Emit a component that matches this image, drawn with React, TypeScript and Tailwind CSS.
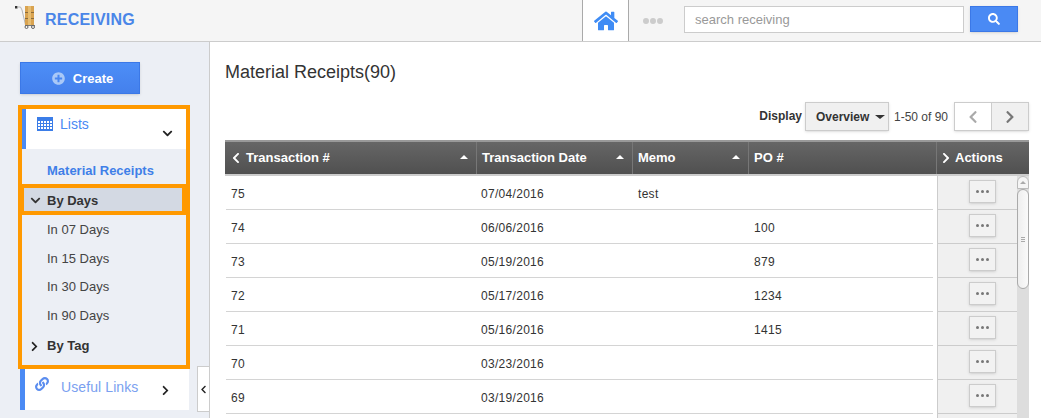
import { FaChevronDown, FaChevronLeft, FaChevronRight, FaHome, FaLink, FaPlusCircle, FaSearch } from 'react-icons/fa';

const rows = [
  { id: '75', date: '07/04/2016', memo: 'test', po: '' },
  { id: '74', date: '06/06/2016', memo: '', po: '100' },
  { id: '73', date: '05/19/2016', memo: '', po: '879' },
  { id: '72', date: '05/17/2016', memo: '', po: '1234' },
  { id: '71', date: '05/16/2016', memo: '', po: '1415' },
  { id: '70', date: '03/23/2016', memo: '', po: '' },
  { id: '69', date: '03/19/2016', memo: '', po: '' },
];

function TrolleyLogo() {
  return (
    <svg width="21" height="23" viewBox="0 0 21 23" className="shrink-0">
      <rect x="0" y="0" width="2.5" height="2.5" fill="#333" />
      <path d="M2 1h3.5l1.5 3 3.5 15" fill="none" stroke="#b5b5b5" strokeWidth="1" />
      <rect x="10" y="0" width="9" height="19" fill="#d9a350" />
      <rect x="10" y="6" width="9" height="1" fill="#8a6a3a" />
      <rect x="10" y="12" width="9" height="1" fill="#8a6a3a" />
      <rect x="13" y="0" width="3" height="19" fill="#e6bd72" />
      <rect x="10" y="19" width="10" height="1" fill="#777" />
      <circle cx="11.5" cy="21" r="1.5" fill="none" stroke="#666" strokeWidth="1" />
      <circle cx="18" cy="21" r="1.5" fill="none" stroke="#666" strokeWidth="1" />
    </svg>
  );
}

function GridIcon() {
  return (
    <svg width="16" height="14" viewBox="0 0 16 14">
      <rect width="16" height="14" fill="#3b7de8" />
      {[1, 4, 7, 10, 13].map((x) =>
        [4, 7, 10].map((y) => <rect key={`${x}-${y}`} x={x} y={y} width="2" height="2" fill="#fff" />),
      )}
    </svg>
  );
}

function SortCaret() {
  return <span className="h-0 w-0 border-x-[4px] border-b-[4px] border-x-transparent border-b-white" />;
}

function HeaderCell({ label, width, back }: { label: string; width: string; back?: boolean }) {
  return (
    <div className={`${width} flex h-full items-center border-r border-[#777] pl-[5px] pr-[8px]`}>
      {back && <FaChevronLeft className="mr-[4px] text-[12px]" />}
      <span>{label}</span>
      <span className="ml-auto flex pb-[3px]">
        <SortCaret />
      </span>
    </div>
  );
}

function DayLink({ label, className }: { label: string; className: string }) {
  return <div className={`${className} flex items-center pl-[25px] text-[13px] text-[#444]`}>{label}</div>;
}

export default function App() {
  return (
    <div className="h-[418px] w-[1041px] overflow-hidden bg-white font-['Liberation_Sans',Arial,sans-serif] text-[12px] text-[#333]">
      <header className="flex h-[42px] items-stretch border-b border-[#ccc] bg-[#f5f5f5]">
        <div className="flex w-[582px] items-start">
          <div className="ml-[15px] mt-[6px]">
            <TrolleyLogo />
          </div>
          <span className="ml-[9px] mt-[10px] text-[16px] font-bold leading-[20px] tracking-[0.2px] text-[#4a86e8]">RECEIVING</span>
        </div>
        <div className="flex h-[41px] w-[47px] items-center justify-center border-x border-[#aaa] bg-white">
          <FaHome className="text-[24px] text-[#3f8cf5]" />
        </div>
        <div className="ml-[14px] flex items-center gap-[1px]">
          <span className="h-[6px] w-[6px] rounded-full bg-[#ccc]" />
          <span className="h-[6px] w-[6px] rounded-full bg-[#ccc]" />
          <span className="h-[6px] w-[6px] rounded-full bg-[#ccc]" />
        </div>
        <div className="ml-[21px] mt-[6px] flex h-[27px] w-[280px] items-center border border-[#ccc] bg-white pl-[10px] text-[13px] text-[#999]">
          search receiving
        </div>
        <button className="ml-[6px] mt-[6px] flex h-[26px] w-[48px] items-center justify-center border border-[#3b78e7] bg-[#4a8af4] text-[12px] text-white shadow-sm">
          <FaSearch />
        </button>
      </header>

      <div className="flex h-[376px]">
        <aside className="relative h-full w-[210px] shrink-0 border-r border-[#ccc] bg-[#eceff5] pl-[18px]">
          <button className="ml-[2px] mt-[20px] flex h-[32px] w-[120px] items-center justify-center gap-[8px] border border-[#3b78e7] bg-gradient-to-b from-[#4d8ef7] to-[#4480ec] pl-[5px] pt-px text-[13px] font-bold text-white shadow-sm">
            <FaPlusCircle className="text-[13px] text-[#a9c8f7]" />
            Create
          </button>

          <div className="mt-[11px] h-[264px] w-[172px] border-4 border-[#ff9900]">
            <div className="flex h-[40px] border-l-4 border-[#4a8af4] bg-white pl-[11px] text-[#4a8af4]">
              <div className="flex h-[30px] items-center gap-[7px] text-[14px]">
                <GridIcon />
                <span>Lists</span>
              </div>
              <FaChevronDown className="ml-auto mr-[13px] mt-[19px] text-[11px] text-[#222]" />
            </div>
            <div className="flex h-[35px] items-center pl-[25px] pt-[8px] text-[13px] font-bold text-[#3f7fe8]">
              Material Receipts
            </div>
            <div className="h-[31px] border-y-4 border-[#ff9900]">
              <div className="flex h-full items-center border-l-2 border-r-4 border-[#ff9900] bg-[#d3d9e3] pl-[6px] pt-[2px] text-[13px] font-bold text-[#333]">
                <FaChevronDown className="mr-[6px] text-[11px]" />
                By Days
              </div>
            </div>
            <DayLink label="In 07 Days" className="h-[29px]" />
            <DayLink label="In 15 Days" className="h-[29px]" />
            <DayLink label="In 30 Days" className="h-[28px]" />
            <DayLink label="In 90 Days" className="h-[29px]" />
            <div className="flex h-[30px] items-center pl-[7px] pt-[2px] text-[13px] font-bold text-[#333]">
              <FaChevronRight className="mr-[7px] text-[11px] text-[#222]" />
              By Tag
            </div>
          </div>

          <div className="ml-[2px] flex h-[41px] w-[169px] border-l-[5px] border-[#4a8af4] bg-white pl-[10px] text-[14px] text-[#7a9ff0]">
            <FaLink className="mt-[8px] text-[14px] text-[#5b8def]" />
            <span className="ml-[12px] mt-[9px] leading-[18px] tracking-[0.1px]">Useful Links</span>
            <FaChevronRight className="ml-auto mr-[18px] mt-[16px] text-[11px] text-[#222]" />
          </div>

          <div className="absolute right-0 top-[324px] flex h-[46px] w-[12px] items-center justify-center border border-r-0 border-[#ccc] bg-white">
            <FaChevronLeft className="text-[9px] text-[#222]" />
          </div>
        </aside>

        <main className="min-w-0 flex-1 pl-[15px]">
          <h1 className="mt-[18px] h-[24px] text-[18px] leading-[24px] text-[#333]">Material Receipts(90)</h1>

          <div className="mt-[18px] flex h-[29px] w-[804px] items-center justify-end">
            <span className="mb-[1px] font-bold">Display</span>
            <div className="ml-[3px] flex h-[29px] w-[84px] items-center gap-[6px] border border-[#ccc] bg-[#f0f0f0] pl-[10px] font-bold shadow-sm">
              Overview
              <span className="h-0 w-0 border-x-[5px] border-t-[4px] border-x-transparent border-t-[#333]" />
            </div>
            <span className="ml-[5px] w-[60px] text-[#444]">1-50 of 90</span>
            <div className="flex h-[29px] w-[75px] border border-[#ccc] shadow-sm">
              <div className="flex flex-1 items-center justify-center bg-white text-[14px] text-[#aaa]">
                <FaChevronLeft />
              </div>
              <div className="flex w-[37px] items-center justify-center border-l border-[#ccc] bg-[#f0f0f0] text-[14px] text-[#777]">
                <FaChevronRight />
              </div>
            </div>
          </div>

          <div className="mt-[9px] w-[804px]">
            <div className="flex h-[36px] border-y-2 border-b-[#ccc] border-t-[#999] bg-gradient-to-b from-[#666] to-[#505050] text-[13px] font-bold text-white">
              <HeaderCell label="Transaction #" width="w-[252px]" back />
              <HeaderCell label="Transaction Date" width="w-[156px]" />
              <HeaderCell label="Memo" width="w-[116px]" />
              <div className="flex h-full w-[188px] items-center border-r border-[#777] pl-[5px]">PO #</div>
              <div className="flex h-full flex-1 items-center pl-[3px]">
                <FaChevronRight className="mr-[3px] text-[12px]" />
                Actions
              </div>
            </div>

            <div className="flex h-[300px]">
              <div className="w-[708px] pl-px tracking-[0.3px]">
                {rows.map((r) => (
                  <div key={r.id} className="flex h-[34px] items-center border-b border-[#d4d4d4] pt-[2px]">
                    <span className="w-[250px] pl-[5px]">{r.id}</span>
                    <span className="w-[157px] pl-[5px]">{r.date}</span>
                    <span className="w-[116px] pl-[5px]">{r.memo}</span>
                    <span className="pl-[5px]">{r.po}</span>
                  </div>
                ))}
              </div>
              <div className="ml-[4px] flex flex-1 border-l border-[#ccc] bg-[#f0f0f0]">
                <div className="w-[79px]">
                  {rows.map((r) => (
                    <div key={r.id} className="flex h-[34px] items-start justify-end border-b border-[#ccc] pr-[21px] pt-[4px]">
                      <div className="flex h-[23px] w-[27px] items-center justify-center gap-[2px] border border-[#ccc] bg-[#f2f2f2] shadow-sm">
                        <span className="h-[3px] w-[3px] rounded-full bg-[#777]" />
                        <span className="h-[3px] w-[3px] rounded-full bg-[#777]" />
                        <span className="h-[3px] w-[3px] rounded-full bg-[#777]" />
                      </div>
                    </div>
                  ))}
                </div>
                <div className="flex w-[12px] flex-col bg-[#ddd]">
                  <div className="flex h-[13px] justify-center rounded-t-[6px] border border-[#bbb] bg-[#f5f5f5] pt-[4px]">
                    <span className="h-0 w-0 border-x-[3px] border-b-[3px] border-x-transparent border-b-[#aaa]" />
                  </div>
                  <div className="flex h-[100px] flex-col items-center justify-center gap-[1px] rounded-[6px] border border-[#aaa] bg-gradient-to-r from-[#eee] to-[#fafafa]">
                    <span className="h-px w-[4px] bg-[#aaa]" />
                    <span className="h-px w-[4px] bg-[#aaa]" />
                    <span className="h-px w-[4px] bg-[#aaa]" />
                  </div>
                </div>
              </div>
            </div>
          </div>
        </main>
      </div>
    </div>
  );
}
